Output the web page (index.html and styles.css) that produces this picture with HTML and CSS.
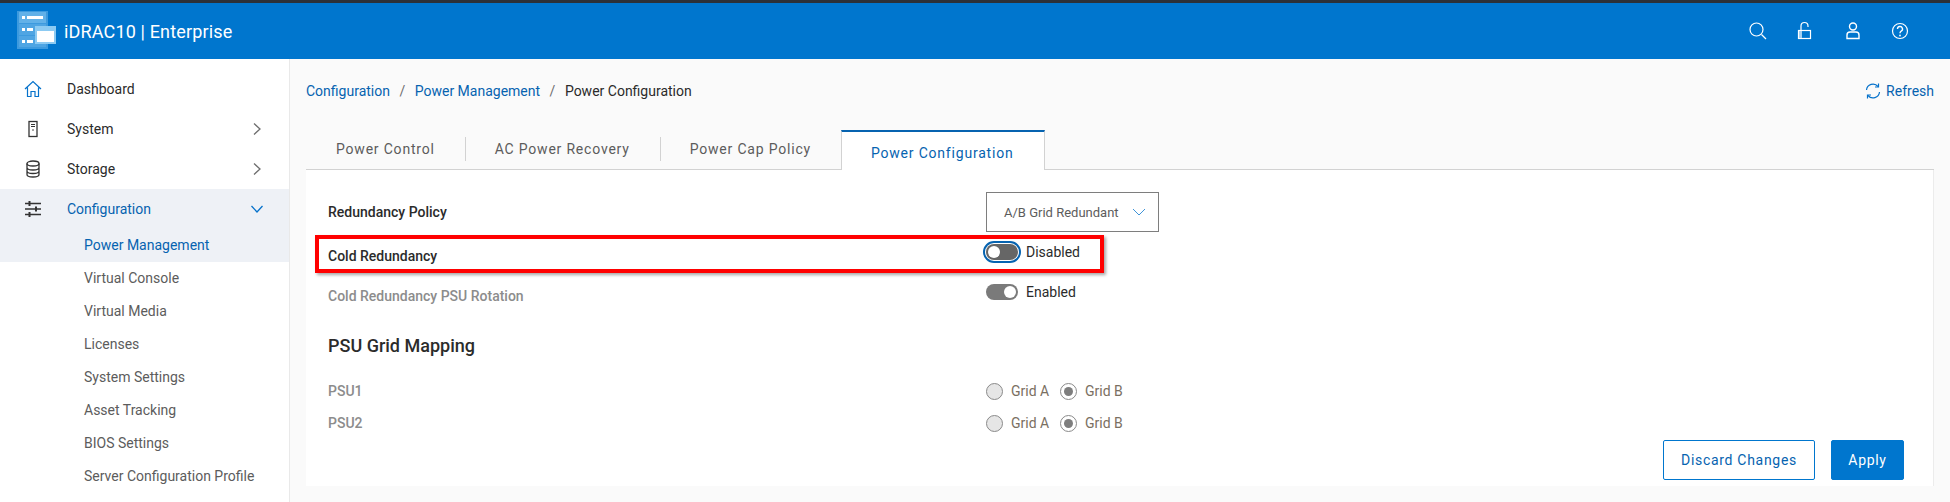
FILE: index.html
```html
<!DOCTYPE html>
<html lang="en">
<head>
    <meta charset="UTF-8">
    <title>iDRAC10 | Enterprise</title>
    <link rel="stylesheet" href="styles.css">
</head>
<body>
    <div class="top-strip"></div>
    <header class="header">
        <svg class="logo" width="40" height="40" viewBox="0 0 40 40">
            <rect x="0" y="0" width="31" height="38" fill="#3d9ade"/>
            <rect x="2" y="1" width="27" height="11" fill="#62b1e8"/>
            <rect x="2" y="13" width="27" height="11" fill="#4fa5e3"/>
            <rect x="2" y="25" width="27" height="11" fill="#4fa5e3"/>
            <rect x="5" y="5" width="3" height="3" fill="#fff"/>
            <rect x="10" y="5" width="16" height="3" fill="#fff"/>
            <rect x="5" y="17" width="3" height="3" fill="#fff"/>
            <rect x="10" y="17" width="6" height="3" fill="#fff"/>
            <rect x="5" y="29" width="3" height="3" fill="#fff"/>
            <rect x="10" y="29" width="6" height="3" fill="#fff"/>
            <rect x="18" y="15" width="21" height="18" fill="#8ccaf2"/>
            <rect x="20" y="20" width="17" height="11" fill="#fff"/>
        </svg>
        <div class="product">iDRAC10 | Enterprise</div>
        <div class="header-icons">
            <svg width="20" height="20" viewBox="0 0 20 20" fill="none" stroke="#fff" stroke-width="1.2"><circle cx="8.5" cy="8.5" r="6.5"/><path d="M13.5 13.5L18 18"/></svg>
            <svg width="20" height="20" viewBox="0 0 20 20" fill="none" stroke="#fff" stroke-width="1.2"><rect x="3.5" y="9.5" width="12" height="8"/><path d="M6 9V5a3.5 3.5 0 0 1 7 0v1"/><rect x="4" y="10" width="3" height="7" fill="#a5d0f0" stroke="none"/></svg>
            <svg width="20" height="20" viewBox="0 0 20 20" fill="none" stroke="#fff" stroke-width="1.4"><circle cx="10" cy="5.5" r="3.5"/><path d="M4 17.5v-3.500a3 3 0 0 1 3-3h6a3 3 0 0 1 3 3v3.500z"/></svg>
            <svg width="20" height="20" viewBox="0 0 20 20" fill="none" stroke="#fff" stroke-width="1.2"><circle cx="10" cy="10" r="7.500"/><path d="M7.500 8a2.500 2.500 0 1 1 3.700 2.200c-.8.500-1.200 1-1.200 2" stroke-width="1.400"/><circle cx="10" cy="14.500" r=".9" fill="#fff" stroke="none"/></svg>
        </div>
    </header>

    <div class="layout">
        <nav class="sidebar">
            <a class="nav-item">
                <svg width="18" height="18" viewBox="0 0 18 18" fill="none" stroke="#0672cb" stroke-width="1.200"><path d="M1 9L9 1.500L17 9M3.500 7.500V16.500H7V11.500H11V16.500H14.500V7.500"/></svg>
                <span>Dashboard</span>
            </a>
            <a class="nav-item">
                <svg width="18" height="18" viewBox="0 0 18 18" fill="none" stroke="#333" stroke-width="1.300"><rect x="5" y="1.500" width="8" height="15"/><path d="M7 4.500H11M7 6.500H11" stroke-width="1.200"/><circle cx="9" cy="10" r=".8" fill="#333" stroke="none"/></svg>
                <span>System</span>
                <svg class="chev" width="12" height="12" viewBox="0 0 12 12" fill="none" stroke="#6e6e6e" stroke-width="1.300"><path d="M3 .5L9 6L3 11.500"/></svg>
            </a>
            <a class="nav-item">
                <svg width="18" height="18" viewBox="0 0 18 18" fill="none" stroke="#333" stroke-width="1.300"><ellipse cx="9" cy="3.500" rx="6" ry="2.500"/><path d="M3 3.500V14.500C3 16 6 17 9 17S15 16 15 14.500V3.500M3 7.500C3 9 6 10 9 10S15 9 15 7.500M3 11C3 12.500 6 13.500 9 13.500S15 12.500 15 11"/></svg>
                <span>Storage</span>
                <svg class="chev" width="12" height="12" viewBox="0 0 12 12" fill="none" stroke="#6e6e6e" stroke-width="1.300"><path d="M3 .5L9 6L3 11.500"/></svg>
            </a>
            <div class="nav-open">
                <a class="nav-item active">
                    <svg width="18" height="18" viewBox="0 0 18 18" fill="none" stroke="#333" stroke-width="1.300"><path d="M1 3.500H17M1 9H17M1 14.500H17"/><path d="M5.500 1V6M12 6.500V11.500M5.500 12V17" stroke-width="2"/></svg>
                    <span>Configuration</span>
                    <svg class="chev" width="12" height="12" viewBox="0 0 12 12" fill="none" stroke="#0672cb" stroke-width="1.300"><path d="M.5 3L6 9L11.500 3"/></svg>
                </a>
                <a class="sub-item active">Power Management</a>
            </div>
            <a class="sub-item">Virtual Console</a>
            <a class="sub-item">Virtual Media</a>
            <a class="sub-item">Licenses</a>
            <a class="sub-item">System Settings</a>
            <a class="sub-item">Asset Tracking</a>
            <a class="sub-item">BIOS Settings</a>
            <a class="sub-item">Server Configuration Profile</a>
        </nav>

        <main class="main">
            <div class="topline">
                <div class="breadcrumb">
                    <a>Configuration</a><span class="sep">/</span><a>Power Management</a><span class="sep">/</span><span>Power Configuration</span>
                </div>
                <a class="refresh">
                    <svg width="16" height="16" viewBox="0 0 16 16" fill="none" stroke="#0672cb" stroke-width="1.200"><path d="M1.500 7A6.500 6.500 0 0 1 13 3.500M14.500 9A6.500 6.500 0 0 1 3 12.500"/><path d="M13.500 .5V4H10M2.500 15.500V12H6"/></svg>
                    Refresh
                </a>
            </div>

            <div class="tabs">
                <div class="tab">Power Control</div>
                <div class="tab">AC Power Recovery</div>
                <div class="tab">Power Cap Policy</div>
                <div class="tab selected">Power Configuration</div>
            </div>

            <section class="panel">
                <div class="row">
                    <div class="label">Redundancy Policy</div>
                    <div class="select">A/B Grid Redundant
                        <svg width="14" height="8" viewBox="0 0 14 8" fill="none" stroke="#3f94d8" stroke-width="1"><path d="M1 1L7 7L13 1"/></svg>
                    </div>
                </div>
                <div class="row">
                    <div class="label low">Cold Redundancy</div>
                    <div class="toggle-wrap"><span class="toggle focus"></span>Disabled</div>
                </div>
                <div class="row">
                    <div class="label low muted">Cold Redundancy PSU Rotation</div>
                    <div class="toggle-wrap"><span class="toggle on"></span>Enabled</div>
                </div>
                <h2 class="section-title">PSU Grid Mapping</h2>
                <div class="row psu">
                    <div class="label muted">PSU1</div>
                    <div class="radios">
                        <span class="radio"></span><span class="radio-text">Grid A</span>
                        <span class="radio checked"></span><span class="radio-text">Grid B</span>
                    </div>
                </div>
                <div class="row psu">
                    <div class="label muted">PSU2</div>
                    <div class="radios">
                        <span class="radio"></span><span class="radio-text">Grid A</span>
                        <span class="radio checked"></span><span class="radio-text">Grid B</span>
                    </div>
                </div>
                <div class="actions">
                    <button class="btn">Discard Changes</button>
                    <button class="btn primary">Apply</button>
                </div>
                <div class="callout"></div>
            </section>
        </main>
    </div>
</body>
</html>
```

FILE: styles.css
```css
* {
    box-sizing: border-box;
}
body {
    margin: 0;
    height: 502px;
    overflow: hidden;
    background: #fafafa;
    font-family: Roboto, "Liberation Sans", sans-serif;
    font-size: 14px;
    color: #2b2b2b;
}
.top-strip {
    height: 3px;
    background: #2c3138;
}
.header {
    display: flex;
    align-items: center;
    height: 56px;
    padding-left: 17px;
    background: #0076ce;
    color: #fff;
}
.logo {
    flex: none;
}
.product {
    margin-left: 7px;
    font-size: 18px;
    letter-spacing: 0.15px;
}
.header-icons {
    display: flex;
    gap: 27.5px;
    margin-left: auto;
    padding-right: 40px;
}

.layout {
    display: flex;
}
.sidebar {
    flex: none;
    width: 290px;
    height: 443px;
    padding-top: 10px;
    background: #fff;
    border-right: 1px solid #e9e9e9;
}
.nav-item {
    display: flex;
    align-items: center;
    height: 40px;
    padding: 0 26px 0 24px;
}
.nav-item span {
    margin-left: 25px;
}
.nav-item .chev {
    margin-left: auto;
}
.nav-item.active {
    color: #0663b0;
}
.nav-open {
    height: 73px;
    background: #eef1f6;
}
.sub-item {
    display: flex;
    align-items: center;
    height: 33px;
    padding: 0 0 2px 84px;
    color: #5c5c5c;
}
.sub-item.active {
    color: #0663b0;
}

.main {
    flex: 1;
    padding: 0 16px;
    min-width: 0;
}
.topline {
    display: flex;
    justify-content: space-between;
    align-items: center;
    height: 64px;
}
.breadcrumb {
    font-size: 14px;
    color: #2b2b2b;
}
.breadcrumb a {
    color: #0663b0;
}
.sep {
    margin: 0 9.5px;
    color: #6e6e6e;
}
.refresh {
    display: flex;
    align-items: center;
    gap: 5px;
    color: #0663b0;
}
.tabs {
    display: flex;
    align-items: center;
    height: 47px;
    border-bottom: 1px solid #d2d2d2;
}
.tab {
    height: 24px;
    line-height: 24px;
    margin-top: 6px;
    padding: 0 30px;
    color: #5c5c5c;
    letter-spacing: 0.8px;
}
.tab + .tab {
    padding-left: 29px;
    border-left: 1px solid #d2d2d2;
}
.tab.selected {
    height: 40px;
    line-height: 42px;
    margin-top: 0;
    align-self: flex-end;
    margin-bottom: -1px;
    background: #fff;
    color: #0663b0;
    border: 1px solid #d2d2d2;
    border-top: 2px solid #0663b0;
    border-bottom: 0;
}

.panel {
    position: relative;
    height: 316px;
    padding: 22px 29px 0 22px;
    background: #fff;
    border-right: 1px solid #ececec;
}
.row {
    display: flex;
    align-items: center;
    height: 40px;
}
.label {
    width: 658px;
    font-weight: 500;
}
.label.low {
    padding-top: 8px;
}
.label.muted {
    color: #8c8c8c;
}
.select {
    display: flex;
    align-items: center;
    justify-content: space-between;
    width: 173px;
    height: 40px;
    padding: 0 12px 0 17px;
    border: 1px solid #7e7e7e;
    font-size: 13px;
    color: #5c5c5c;
}
.toggle-wrap {
    display: flex;
    align-items: center;
    gap: 8px;
    color: #2b2b2b;
}
.toggle {
    position: relative;
    width: 32px;
    height: 16px;
    border-radius: 8px;
    background: #666;
}
.toggle::after {
    content: "";
    position: absolute;
    top: 2px;
    left: 2px;
    width: 12px;
    height: 12px;
    border-radius: 50%;
    background: #fff;
}
.toggle.on {
    background: #7a7a7a;
}
.toggle.on::after {
    left: 18px;
}
.toggle.focus {
    outline: 2px solid #0663b0;
    outline-offset: 1px;
}
.section-title {
    margin: 0;
    height: 63px;
    padding-top: 22px;
    font-size: 18px;
    font-weight: 500;
    line-height: 24px;
    color: #2b2b2b;
}
.row.psu {
    height: 32px;
}
.radios {
    display: flex;
    align-items: center;
    font-size: 14px;
    color: #7a6f62;
}
.radio {
    position: relative;
    width: 17px;
    height: 17px;
    border-radius: 50%;
    border: 1px solid #8a8a8a;
    background: #e6e6e6;
}
.radio.checked {
    background: #fff;
}
.radio.checked::after {
    content: "";
    position: absolute;
    top: 3px;
    left: 3px;
    width: 9px;
    height: 9px;
    border-radius: 50%;
    background: #7e7e7e;
}
.radio-text {
    width: 49px;
    margin-left: 8px;
}
.actions {
    display: flex;
    justify-content: flex-end;
    gap: 16px;
    margin-top: 1px;
}
.btn {
    height: 40px;
    width: 152px;
    border: 1px solid #0076ce;
    border-radius: 2px;
    background: #fff;
    color: #0663b0;
    font-family: Roboto, "Liberation Sans", sans-serif;
    font-size: 14px;
    letter-spacing: 0.7px;
}
.btn.primary {
    width: 73px;
    background: #0076ce;
    color: #fff;
}

/* red annotation drawn over the screenshot */
.callout {
    position: absolute;
    top: 65px;
    left: 9px;
    width: 789px;
    height: 38px;
    border: 4px solid #f00;
    box-shadow: 2px 2px 3px rgba(0, 0, 0, 0.35);
}
```
